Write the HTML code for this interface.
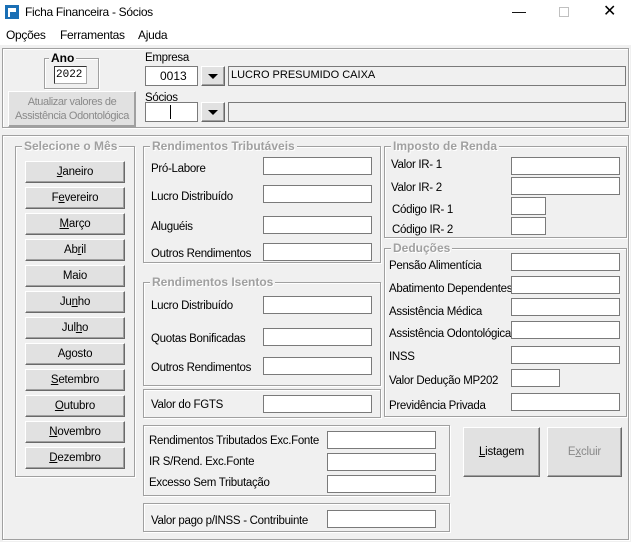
<html><head><style>
*{margin:0;padding:0;box-sizing:border-box}
body{width:631px;height:542px;background:#f0f0f0;font-family:"Liberation Sans",sans-serif;font-size:12px;color:#000;position:relative;overflow:hidden}
.a{position:absolute}
.t{position:absolute;white-space:nowrap;font-size:11.5px;letter-spacing:-0.3px;margin-top:2px}
.i{position:absolute;background:#fff;border:1px solid #7a7a7a;height:19px}
.g{position:absolute;border:1px solid #a0a0a0;box-shadow:inset 1px 1px 0 #fff,1px 1px 0 #fff}
.gl{position:absolute;top:-8px;left:6px;background:#f0f0f0;padding:0 2px;color:#a0a0a0;font-weight:bold;font-size:12px;white-space:nowrap;text-shadow:1px 1px 0 #fff}
.b{position:absolute;background:#e1e1e1;border:1px solid;border-color:#fff #696969 #696969 #fff;box-shadow:inset -1px -1px 0 #a0a0a0;text-align:center;font-size:11.5px;letter-spacing:-0.2px}
</style></head><body>
<div class="a" style="left:0;top:0;width:631px;height:25px;background:#fff"></div>
<div class="a" style="left:5px;top:5px;width:14px;height:14px;background:#1a6fb5"></div>
<div class="a" style="left:8px;top:8px;width:8px;height:4px;border:2px solid #fff;border-left:2px solid #fff"></div>
<div class="a" style="left:8px;top:8px;width:2px;height:9px;background:#fff"></div>
<div class="t" style="left:25px;top:3px;font-size:12px">Ficha Financeira - Sócios</div>
<div class="t" style="left:512px;top:1px;font-size:14px">&#8212;</div>
<div class="a" style="left:559px;top:7px;width:10px;height:10px;border:1px solid #c0c0c0"></div>
<div class="t" style="left:603px;top:-1px;font-size:16px">&#10005;</div>
<div class="a" style="left:0;top:25px;width:631px;height:20px;background:#fff"></div>
<div class="t" style="left:6px;top:26px;font-size:12px">Opções</div>
<div class="t" style="left:60px;top:26px;font-size:12px">Ferramentas</div>
<div class="t" style="left:138px;top:26px;font-size:12px">Ajuda</div>

<div class="g" style="left:2px;top:48px;width:627px;height:80px"></div>
<div class="g" style="left:44px;top:58px;width:55px;height:31px"><div class="gl" style="color:#000;text-shadow:none;left:4px">Ano</div></div>
<div class="i" style="left:54px;top:66px;width:33px;height:18px;border-color:#333 #aaa #aaa #333;font-family:'Liberation Mono',monospace;font-size:11px;padding:2px 1px">2022</div>
<div class="t" style="left:145px;top:50px">Empresa</div>
<div class="i" style="left:145px;top:66px;width:53px;height:20px;padding:2px 0 0 14px">0013</div>
<div class="b" style="left:201px;top:66px;width:24px;height:20px"><div class="a" style="left:6px;top:7px;border:5px solid transparent;border-top:5px solid #000;border-bottom:0"></div></div>
<div class="i" style="left:228px;top:66px;width:398px;height:20px;background:#f0f0f0;padding:2px 2px;font-size:11px">LUCRO PRESUMIDO CAIXA</div>
<div class="b" style="left:8px;top:91px;width:128px;height:36px;color:#8a8a8a;line-height:14px;padding-top:3px;border-color:#fff #a0a0a0 #a0a0a0 #fff;font-size:11px;letter-spacing:-0.4px;white-space:nowrap">Atualizar valores de<br>Assistência Odontológica</div>
<div class="t" style="left:145px;top:90px">Sócios</div>
<div class="i" style="left:145px;top:102px;width:53px;height:20px"><div class="a" style="left:24px;top:2px;width:1px;height:14px;background:#000"></div></div>
<div class="b" style="left:201px;top:102px;width:24px;height:20px"><div class="a" style="left:6px;top:7px;border:5px solid transparent;border-top:5px solid #000;border-bottom:0"></div></div>
<div class="i" style="left:228px;top:102px;width:398px;height:20px;background:#f0f0f0"></div>

<div class="g" style="left:2px;top:135px;width:627px;height:405px"></div>
<div class="g" style="left:15px;top:146px;width:120px;height:331px"><div class="gl">Selecione o Mês</div></div>
<div class="b" style="left:25px;top:161px;width:100px;height:22px;line-height:20px"><u>J</u>aneiro</div>
<div class="b" style="left:25px;top:187px;width:100px;height:22px;line-height:20px">F<u>e</u>vereiro</div>
<div class="b" style="left:25px;top:213px;width:100px;height:22px;line-height:20px"><u>M</u>arço</div>
<div class="b" style="left:25px;top:239px;width:100px;height:22px;line-height:20px">Ab<u>r</u>il</div>
<div class="b" style="left:25px;top:265px;width:100px;height:22px;line-height:20px">Maio</div>
<div class="b" style="left:25px;top:291px;width:100px;height:22px;line-height:20px">Ju<u>n</u>ho</div>
<div class="b" style="left:25px;top:317px;width:100px;height:22px;line-height:20px">Jul<u>h</u>o</div>
<div class="b" style="left:25px;top:343px;width:100px;height:22px;line-height:20px">Agosto</div>
<div class="b" style="left:25px;top:369px;width:100px;height:22px;line-height:20px"><u>S</u>etembro</div>
<div class="b" style="left:25px;top:395px;width:100px;height:22px;line-height:20px"><u>O</u>utubro</div>
<div class="b" style="left:25px;top:421px;width:100px;height:22px;line-height:20px"><u>N</u>ovembro</div>
<div class="b" style="left:25px;top:447px;width:100px;height:22px;line-height:20px"><u>D</u>ezembro</div>

<div class="g" style="left:143px;top:146px;width:238px;height:117px"><div class="gl">Rendimentos Tributáveis</div></div>
<div class="t" style="left:151px;top:161px">Pró-Labore</div><div class="i" style="left:263px;top:157px;width:109px;height:18px"></div>
<div class="t" style="left:151px;top:189px">Lucro Distribuído</div><div class="i" style="left:263px;top:185px;width:109px;height:18px"></div>
<div class="t" style="left:151px;top:219px">Aluguéis</div><div class="i" style="left:263px;top:216px;width:109px;height:18px"></div>
<div class="t" style="left:151px;top:246px">Outros Rendimentos</div><div class="i" style="left:263px;top:243px;width:109px;height:18px"></div>

<div class="g" style="left:143px;top:282px;width:238px;height:104px"><div class="gl">Rendimentos Isentos</div></div>
<div class="t" style="left:151px;top:298px">Lucro Distribuído</div><div class="i" style="left:263px;top:296px;width:109px;height:18px"></div>
<div class="t" style="left:151px;top:331px">Quotas Bonificadas</div><div class="i" style="left:263px;top:328px;width:109px;height:18px"></div>
<div class="t" style="left:151px;top:360px">Outros Rendimentos</div><div class="i" style="left:263px;top:357px;width:109px;height:18px"></div>

<div class="g" style="left:143px;top:389px;width:238px;height:29px"></div>
<div class="t" style="left:151px;top:397px">Valor do FGTS</div><div class="i" style="left:263px;top:395px;width:109px;height:18px"></div>

<div class="g" style="left:143px;top:425px;width:307px;height:71px"></div>
<div class="t" style="left:149px;top:433px">Rendimentos Tributados Exc.Fonte</div><div class="i" style="left:327px;top:431px;width:109px;height:18px"></div>
<div class="t" style="left:149px;top:454px">IR S/Rend. Exc.Fonte</div><div class="i" style="left:327px;top:453px;width:109px;height:18px"></div>
<div class="t" style="left:149px;top:475px">Excesso Sem Tributação</div><div class="i" style="left:327px;top:475px;width:109px;height:18px"></div>
<div class="g" style="left:143px;top:503px;width:307px;height:29px"></div>
<div class="t" style="left:151px;top:513px">Valor pago p/INSS - Contribuinte</div><div class="i" style="left:327px;top:510px;width:109px;height:18px"></div>

<div class="g" style="left:384px;top:146px;width:243px;height:92px"><div class="gl">Imposto de Renda</div></div>
<div class="t" style="left:391px;top:157px">Valor IR- 1</div><div class="i" style="left:511px;top:157px;width:109px;height:18px"></div>
<div class="t" style="left:391px;top:180px">Valor IR- 2</div><div class="i" style="left:511px;top:177px;width:109px;height:18px"></div>
<div class="t" style="left:392px;top:202px">Código IR- 1</div><div class="i" style="left:511px;top:197px;width:35px;height:18px"></div>
<div class="t" style="left:392px;top:222px">Código IR- 2</div><div class="i" style="left:511px;top:217px;width:35px;height:18px"></div>

<div class="g" style="left:384px;top:248px;width:243px;height:169px"><div class="gl">Deduções</div></div>
<div class="t" style="left:389px;top:258px">Pensão Alimentícia</div><div class="i" style="left:511px;top:253px;width:109px;height:18px"></div>
<div class="t" style="left:389px;top:281px">Abatimento Dependentes</div><div class="i" style="left:511px;top:276px;width:109px;height:18px"></div>
<div class="t" style="left:389px;top:304px">Assistência Médica</div><div class="i" style="left:511px;top:298px;width:109px;height:18px"></div>
<div class="t" style="left:389px;top:326px">Assistência Odontológica</div><div class="i" style="left:511px;top:321px;width:109px;height:18px"></div>
<div class="t" style="left:389px;top:349px">INSS</div><div class="i" style="left:511px;top:346px;width:109px;height:18px"></div>
<div class="t" style="left:389px;top:373px">Valor Dedução MP202</div><div class="i" style="left:511px;top:369px;width:49px;height:18px"></div>
<div class="t" style="left:389px;top:398px">Previdência Privada</div><div class="i" style="left:511px;top:393px;width:109px;height:18px"></div>

<div class="b" style="left:463px;top:427px;width:77px;height:50px;line-height:48px"><u>L</u>istagem</div>
<div class="b" style="left:547px;top:427px;width:75px;height:50px;line-height:48px;color:#8a8a8a">E<u>x</u>cluir</div>
</body></html>
